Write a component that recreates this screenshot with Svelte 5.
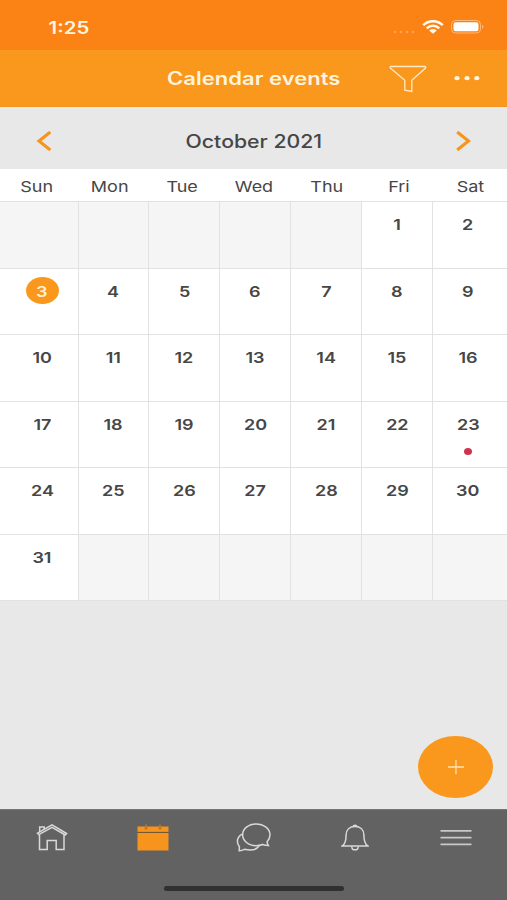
<script lang="ts">
  interface Day {
    num: number | null;
    today: boolean;
    event: boolean;
  }

  const weekdays = ['Sun', 'Mon', 'Tue', 'Wed', 'Thu', 'Fri', 'Sat'];
  const firstWeekday = 5;
  const daysInMonth = 31;

  const days: Day[] = Array.from({ length: 42 }, (_, i) => {
    const num = i - firstWeekday + 1;
    const inMonth = num >= 1 && num <= daysInMonth;
    return { num: inMonth ? num : null, today: num === 3, event: num === 23 };
  });
</script>

<div class="app">
  <div class="status">
    <span class="time"><span class="wide">1:25</span></span>
    <div class="status-icons">
      <svg class="signal" width="22" height="4" viewBox="0 0 22 4">
        <circle cx="2" cy="2" r="1.2" />
        <circle cx="8" cy="2" r="1.2" />
        <circle cx="14" cy="2" r="1.2" />
        <circle cx="20" cy="2" r="1.2" />
      </svg>
      <svg class="wifi" width="22" height="14" viewBox="0 0 22 14">
        <path d="M1.2 5.1C6.8-.2 15.2-.2 20.8 5.1" />
        <path d="M4.7 8.3C8.3 5 13.7 5 17.3 8.3" />
        <path class="base" d="M7.2 10.5Q11 7.6 14.8 10.5L11 13.7Z" />
      </svg>
      <svg class="battery" width="33" height="14" viewBox="0 0 33 14">
        <rect class="case" x=".5" y=".5" width="29" height="12.5" rx="4" />
        <rect x="2.5" y="2.3" width="25" height="9" rx="2.2" />
        <path class="tip" d="M31 4.7Q34 6.8 31 8.9Z" />
      </svg>
    </div>
  </div>

  <header class="header">
    <h1><span class="wide">Calendar events</span></h1>
    <div class="actions">
      <button aria-label="Filter">
        <svg class="filter" width="38" height="28" viewBox="0 0 38 28">
          <path d="M1.5 1.5H36.4Q37 2 36.5 3L22.8 15.2V26.5L15.8 25.2V15.2L1.6 3.3Q.6 2.2 1.5 1.5Z" />
        </svg>
      </button>
      <button aria-label="More">
        <svg class="more" width="26" height="6" viewBox="0 0 26 6">
          <ellipse cx="3" cy="2.2" rx="2.6" ry="2.1" />
          <ellipse cx="13" cy="2.2" rx="2.6" ry="2.1" />
          <ellipse cx="22.8" cy="2.2" rx="2.6" ry="2.1" />
        </svg>
      </button>
    </div>
  </header>

  <div class="month">
    <button aria-label="Previous month">
      <svg class="chevron" width="16" height="20" viewBox="0 0 16 20">
        <path d="M14.3 1L3 10L14.3 19" />
      </svg>
    </button>
    <h2><span class="wide">October 2021</span></h2>
    <button aria-label="Next month">
      <svg class="chevron" width="16" height="20" viewBox="0 0 16 20">
        <path d="M2.2 1L13.5 10L2.2 19" />
      </svg>
    </button>
  </div>

  <div class="weekdays">
    {#each weekdays as name}
      <div><span class="wide">{name}</span></div>
    {/each}
  </div>

  <div class="days">
    {#each days as day}
      <div class="day" class:empty={day.num === null}>
        {#if day.num !== null}
          <span class="num" class:today={day.today}><span class="wide">{day.num}</span></span>
        {/if}
        {#if day.event}
          <span class="dot"></span>
        {/if}
      </div>
    {/each}
  </div>

  <div class="rest">
    <button class="add" aria-label="New event">
      <svg width="18" height="16" viewBox="0 0 18 16">
        <path d="M1 8H17M9 1V15" />
      </svg>
    </button>
  </div>

  <nav class="tabs">
    <button aria-label="Home">
      <svg class="line" width="32" height="28" viewBox="0 0 32 28">
        <path d="M2.8 10.6L1.5 9.2L16 .9L30.6 9.5L29.2 11L16 3.4Z" />
        <path d="M3.5 11V25.5H11.2V16.5H20.2V25.5H28V11" />
        <path d="M3.7 8V3H8.2V5.4" />
      </svg>
    </button>
    <button aria-label="Calendar">
      <svg class="calendar" width="32" height="28" viewBox="0 0 32 28">
        <path d="M.5 2.5H31.5V8H.5ZM.5 9H31.5V26.5H.5Z" />
        <path class="seam" d="M.5 8.4H31.5" />
        <path class="ring" d="M9 2V5.6M23 2V5.6" />
        <path class="pin" d="M9 .5V4.6M23 .5V4.6" />
      </svg>
    </button>
    <button aria-label="Messages">
      <svg class="line" width="36" height="30" viewBox="0 0 36 30">
        <path d="M20 1C27.9 1 34 5.9 34 11.8C34 14.8 32.6 17.2 31.1 18.8Q31.3 20.6 32.4 22.6Q29 22.5 26.5 21.5C24.5 22.3 22.3 22.7 20 22.7C12.4 22.7 6.6 17.8 6.6 11.8C6.6 5.9 12.4 1 20 1Z" />
        <path d="M6.6 10.8C3.2 12.5 1.4 15.3 1.4 18.2C1.4 20.5 2.2 22.2 3.4 23.7L3.2 27.8Q6 27.6 8.4 26.3C14.8 27.8 20.8 26.8 23.3 22.7" />
      </svg>
    </button>
    <button aria-label="Notifications">
      <svg class="line" width="28" height="28" viewBox="0 0 28 28">
        <path d="M1.3 21.9C4.7 19.6 5.1 15.5 5.1 11C5.1 5.5 8.7 2.5 14 2.5C19.3 2.5 22.9 5.5 22.9 11C22.9 15.5 23.3 19.6 26.7 21.9Z" />
        <path d="M10.8 22.4C10.8 27 17.2 27 17.2 22.4M12.2 2.5C12.2.8 15.8.8 15.8 2.5" />
      </svg>
    </button>
    <button aria-label="Menu">
      <svg class="menu" width="32" height="18" viewBox="0 0 32 18">
        <path d="M.5 1.8H31.5M.5 8.7H31.5M.5 15.4H31.5" />
      </svg>
    </button>
  </nav>
  <div class="home-bar"><span></span></div>
</div>

<style>
  :global(body) {
    margin: 0;
  }

  .app {
    display: flex;
    flex-direction: column;
    width: 507px;
    height: 900px;
    overflow: hidden;
    background: #e8e8e8;
    color: #464646;
    font-family: Inter, sans-serif;
  }

  button {
    display: flex;
    align-items: center;
    justify-content: center;
    padding: 0;
    border: 0;
    background: none;
  }

  svg {
    display: block;
    fill: none;
  }

  h1,
  h2 {
    margin: 0;
    font-weight: 600;
    white-space: nowrap;
  }

  /* the type is set wider than its natural proportions */
  .wide {
    display: inline-block;
    transform: scaleX(1.2);
  }

  h1 .wide {
    transform: scaleX(1.225);
  }

  h2 .wide {
    transform: scaleX(1.18);
  }

  .status {
    display: flex;
    justify-content: space-between;
    height: 50px;
    box-sizing: border-box;
    padding: 18px 23px 0 52px;
    background: #fb8214;
    color: #fff3e2;
  }

  .time {
    font-size: 17px;
    font-weight: 600;
    line-height: 21px;
  }

  .status-icons {
    display: flex;
    align-items: flex-start;
    padding-top: 2px;
  }

  .signal {
    margin: 10px 7px 0 0;
    fill: #ffa456;
  }

  .wifi {
    margin-right: 7px;
    stroke: #fff8ee;
    stroke-width: 2.5;
  }

  .wifi .base {
    fill: #fff8ee;
    stroke: none;
  }

  .battery {
    fill: #fff;
  }

  .battery .case {
    fill: none;
    stroke: #ffb877;
  }

  .battery .tip {
    fill: #ffb877;
  }

  .header {
    display: grid;
    grid-template-columns: 1fr auto 1fr;
    align-items: center;
    height: 57px;
    padding-top: 1px;
    box-sizing: border-box;
    border-bottom: 1px solid #ef9526;
    background: #f9981c;
    color: #fff3dd;
  }

  h1 {
    grid-column: 2;
    font-size: 18px;
    line-height: 24px;
  }

  .actions {
    display: flex;
    align-items: center;
    justify-content: flex-end;
    gap: 27px;
    padding-right: 27px;
  }

  .filter {
    stroke: #ffe9c8;
    stroke-width: 1.3;
  }

  .more {
    fill: #fff6e8;
  }

  .month {
    display: flex;
    align-items: center;
    justify-content: space-between;
    height: 62px;
    padding: 5px 36px 0;
    box-sizing: border-box;
    border-top: 1px solid #eee8e2;
  }

  h2 {
    font-size: 18px;
    font-weight: 500;
    line-height: 25px;
  }

  .chevron {
    stroke: #f7941d;
    stroke-width: 3.1;
  }

  .weekdays {
    display: grid;
    grid-template-columns: repeat(7, 1fr);
    height: 32px;
    padding-left: 1px;
    background: #fff;
    font-size: 15px;
    line-height: 35px;
    text-align: center;
  }

  .days {
    display: grid;
    grid-template-columns: 77.5px repeat(5, 70.9px) 1fr;
    grid-auto-rows: 66.5px;
    height: 399px;
    border-bottom: 1px solid #e2e2e2;
  }

  .day {
    display: flex;
    flex-direction: column;
    align-items: center;
    padding-top: 8px;
    box-sizing: border-box;
    border-top: 1px solid #e2e2e2;
    border-left: 1px solid #e2e2e2;
    background: #fff;
  }

  .day:nth-child(7n + 1) {
    padding-left: 7px;
    border-left: 0;
  }

  .day:nth-child(7n) {
    padding-right: 4px;
  }

  .day.empty {
    background: #f5f5f5;
  }

  .num {
    width: 33px;
    height: 27px;
    border-radius: 50%;
    font-size: 15px;
    font-weight: 600;
    line-height: 29px;
    text-align: center;
  }

  .num.today {
    background: #f9981c;
    color: #fff0d8;
  }

  .dot {
    width: 8px;
    height: 7px;
    margin-top: 11px;
    border-radius: 50%;
    background: #cf344c;
  }

  .rest {
    display: flex;
    flex: 1;
    align-items: flex-end;
    justify-content: flex-end;
    padding: 0 14px 11px;
  }

  .add {
    width: 75px;
    height: 62px;
    border-radius: 50%;
    background: #f9981c;
  }

  .add svg {
    stroke: #ffe2b3;
    stroke-width: 1.3;
  }

  .tabs {
    display: grid;
    grid-template-columns: repeat(5, 101px);
    height: 72px;
    padding-left: 1px;
    box-sizing: border-box;
    border-top: 1px solid #767676;
    background: #626262;
  }

  .tabs button {
    height: 56px;
  }

  .line {
    stroke: #d9d9d9;
    stroke-width: 1.5;
  }

  .menu {
    stroke: #c8c8c8;
    stroke-width: 1.7;
  }

  .calendar {
    fill: #f7941d;
  }

  .calendar .seam {
    stroke: #76582d;
  }

  .calendar .ring {
    stroke: #b5752a;
    stroke-width: 2.6;
  }

  .calendar .pin {
    stroke: #c67d22;
    stroke-width: 1.4;
  }

  .home-bar {
    display: flex;
    justify-content: center;
    height: 19px;
    background: #626262;
  }

  .home-bar span {
    width: 180px;
    height: 5px;
    margin-top: 5px;
    border-radius: 3px;
    background: #303030;
  }
</style>
